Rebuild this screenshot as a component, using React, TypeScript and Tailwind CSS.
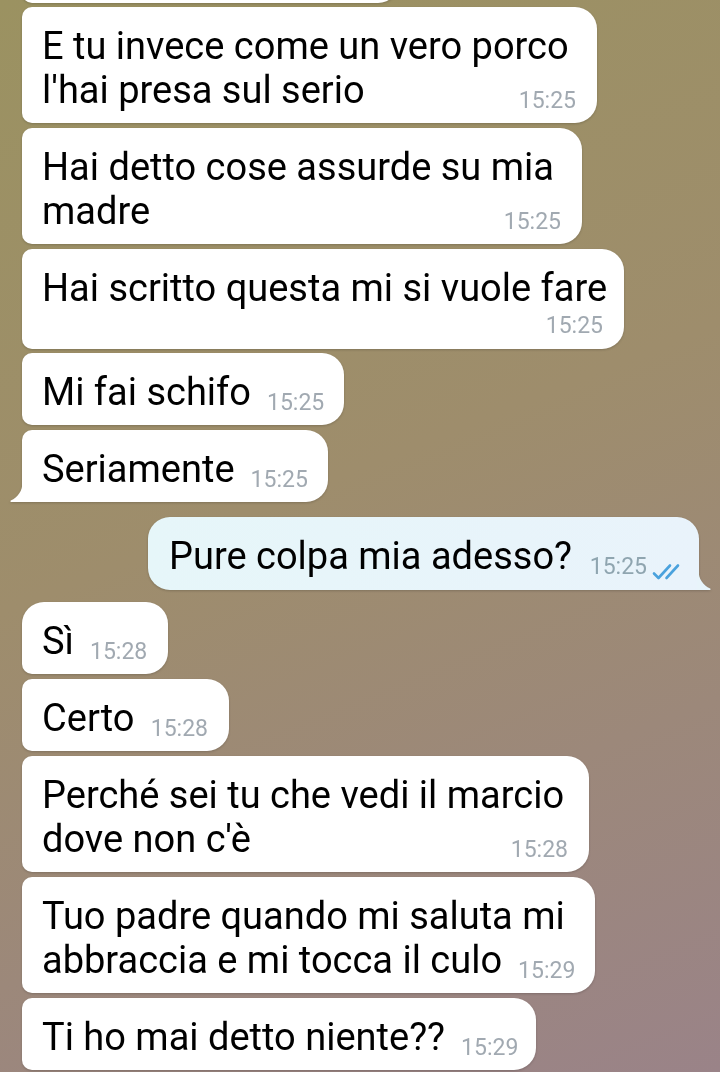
import React from "react";

function Time({ t, out = false }: { t: string; out?: boolean }) {
  return (
    <span
      className={
        "shrink-0 whitespace-nowrap text-[23px] leading-[26px] -mb-[2px] " +
        (out ? "text-[#8fa5b0]" : "text-[#a1a9b1]")
      }
    >
      {t}
    </span>
  );
}

function Checks() {
  return (
    <svg width="36" height="18" viewBox="0 0 36 18" className="-mb-[3px] ml-[4px] shrink-0">
      <path d="M3 10.5 L7.5 15 L19 2.5" fill="none" stroke="#4aa2dd" strokeWidth="2.6" strokeLinecap="round" strokeLinejoin="round" />
      <path d="M15.5 15 L27 2.5" fill="none" stroke="#4aa2dd" strokeWidth="2.6" strokeLinecap="round" />
    </svg>
  );
}

function TailLeft() {
  return (
    <svg width="14" height="20" viewBox="0 0 14 20" className="absolute -left-[12px] bottom-0">
      <path d="M12.5 0 C12.5 9 8 15 0.8 18.6 C0 19 0.3 20 1.2 20 L14 20 L14 0 Z" fill="#ffffff" />
    </svg>
  );
}

function TailRight() {
  return (
    <svg width="14" height="20" viewBox="0 0 14 20" className="absolute -right-[12px] bottom-0">
      <path d="M1.5 0 C1.5 9 6 15 13.2 18.6 C14 19 13.7 20 12.8 20 L0 20 L0 0 Z" fill="#e8f4fa" />
    </svg>
  );
}

type InProps = {
  lines: string[];
  time: string;
  w: string;
  mt: string;
  radius?: string;
  timeBelow?: boolean;
  tail?: boolean;
};

function Incoming({ lines, time, w, mt, radius, timeBelow, tail }: InProps) {
  const r =
    radius ?? "rounded-tl-[10px] rounded-bl-[10px] rounded-tr-[22px] rounded-br-[22px]";
  const first = lines.slice(0, lines.length - 1);
  const last = lines[lines.length - 1];
  return (
    <div className={"relative self-start drop-shadow-[0_1px_1px_rgba(0,0,0,0.18)] " + mt + " " + w}>
      <div className={"bg-white pl-[20px] pr-[21px] pt-[17px] " + (timeBelow ? "pb-[10px] " : "pb-[11px] ") + r}>
        {first.map((l, i) => (
          <div key={i} className="whitespace-nowrap text-[38px] leading-[44px] text-black">
            {l}
          </div>
        ))}
        {timeBelow ? (
          <>
            <div className="whitespace-nowrap text-[38px] leading-[44px] text-black">{last}</div>
            <div className="mt-[3px] flex justify-end">
              <span className="text-[23px] leading-[26px] text-[#a1a9b1]">{time}</span>
            </div>
          </>
        ) : (
          <div className="flex items-end justify-between gap-[16px]">
            <span className="whitespace-nowrap text-[38px] leading-[44px] text-black">{last}</span>
            <Time t={time} />
          </div>
        )}
      </div>
      {tail && <TailLeft />}
    </div>
  );
}

export default function App() {
  return (
    <div className="h-[1072px] w-[720px] overflow-hidden bg-[linear-gradient(158deg,#9b9261_0%,#9e8d6c_45%,#9a8388_100%)] font-[Roboto,'Noto_Sans',sans-serif]">
      <div className="flex flex-col pl-[22px] pr-[21px]">
        <div className="-mt-[40px] h-[43px] w-[378px] self-start rounded-bl-[10px] rounded-br-[22px] bg-white drop-shadow-[0_1px_1px_rgba(0,0,0,0.18)]" />

        <Incoming
          mt="mt-[4px]"
          w="w-[575px]"
          lines={["E tu invece come un vero porco", "l'hai presa sul serio"]}
          time="15:25"
        />
        <Incoming
          mt="mt-[5px]"
          w="w-[560px]"
          lines={["Hai detto cose assurde su mia", "madre"]}
          time="15:25"
        />
        <Incoming
          mt="mt-[5px]"
          w="w-[602px]"
          lines={["Hai scritto questa mi si vuole fare"]}
          time="15:25"
          timeBelow
        />
        <Incoming mt="mt-[4px]" w="w-[322px]" lines={["Mi fai schifo"]} time="15:25" />
        <Incoming
          mt="mt-[5px]"
          w="w-[306px]"
          lines={["Seriamente"]}
          time="15:25"
          tail
          radius="rounded-tl-[10px] rounded-bl-none rounded-tr-[22px] rounded-br-[22px]"
        />

        <div className="relative mt-[15px] w-[551px] self-end drop-shadow-[0_1px_1px_rgba(0,0,0,0.18)]">
          <div className="rounded-[22px] rounded-br-none bg-[linear-gradient(90deg,#e6f6f9,#e9f3fb)] pl-[21px] pr-[12px] pt-[17px] pb-[12px]">
            <div className="flex items-end justify-between gap-[16px]">
              <span className="whitespace-nowrap text-[38px] leading-[44px] text-black">
                Pure colpa mia adesso?
              </span>
              <span className="flex items-end">
                <Time t="15:25" out />
                <Checks />
              </span>
            </div>
          </div>
          <TailRight />
        </div>

        <Incoming
          mt="mt-[12px]"
          w="w-[146px]"
          lines={["Sì"]}
          time="15:28"
          radius="rounded-tl-[22px] rounded-bl-[10px] rounded-tr-[22px] rounded-br-[22px]"
        />
        <Incoming mt="mt-[5px]" w="w-[207px]" lines={["Certo"]} time="15:28" />
        <Incoming
          mt="mt-[5px]"
          w="w-[567px]"
          lines={["Perché sei tu che vedi il marcio", "dove non c'è"]}
          time="15:28"
        />
        <Incoming
          mt="mt-[5px]"
          w="w-[573px]"
          lines={["Tuo padre quando mi saluta mi", "abbraccia e mi tocca il culo"]}
          time="15:29"
        />
        <Incoming mt="mt-[5px]" w="w-[514px]" lines={["Ti ho mai detto niente??"]} time="15:29" />
      </div>
    </div>
  );
}
